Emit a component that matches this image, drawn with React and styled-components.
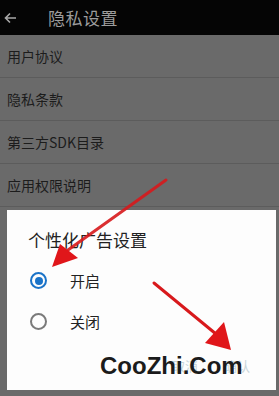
import styled, { createGlobalStyle } from "styled-components";

const GlobalStyle = createGlobalStyle`
  html, body {
    margin: 0;
    padding: 0;
    background: #6a6a6a;
  }
  body {
    font-family: "Noto Sans CJK SC", "Noto Sans", sans-serif;
  }
`;

const Screen = styled.div`
  position: relative;
  width: 279px;
  height: 396px;
  overflow: hidden;
  background: #6a6a6a;
`;

const TopBar = styled.header`
  display: flex;
  align-items: center;
  height: 35px;
  background: #050505;
  padding-left: 1px;
  gap: 27px;
`;

const Title = styled.h1`
  margin: 0;
  font-size: 17px;
  font-weight: 400;
  color: #9c9c9c;
  letter-spacing: 0.5px;
`;

const List = styled.ul`
  list-style: none;
  margin: 0;
  padding: 0;
`;

const Row = styled.li`
  display: flex;
  align-items: center;
  height: 42px;
  padding-left: 7px;
  border-bottom: 1px solid #5c5c5c;
  font-size: 14px;
  color: #1c1c1c;
`;

const Dialog = styled.div`
  position: absolute;
  left: 7px;
  top: 210px;
  width: 269px;
  height: 180px;
  background: #fdfdfd;
  display: flex;
  flex-direction: column;
  box-sizing: border-box;
  padding: 18px 0 0 21px;
`;

const DialogTitle = styled.h2`
  margin: 0 0 8px;
  font-size: 17px;
  line-height: 24px;
  font-weight: 400;
  color: #222;
`;

const Option = styled.label`
  display: flex;
  align-items: center;
  height: 41px;
  gap: 23px;
  font-size: 15px;
  color: #222;
  padding-left: 2px;
`;

const Radio = styled.span`
  box-sizing: border-box;
  width: 17px;
  height: 17px;
  border-radius: 50%;
  border: 2px solid ${(p) => (p.$checked ? "#1a73c8" : "#7a7a7a")};
  display: flex;
  align-items: center;
  justify-content: center;
  &::after {
    content: "";
    width: 8px;
    height: 8px;
    border-radius: 50%;
    background: ${(p) => (p.$checked ? "#1a73c8" : "transparent")};
  }
`;

const Actions = styled.div`
  display: flex;
  justify-content: flex-end;
  gap: 26px;
  margin-top: 14px;
  padding-right: 26px;
`;

const ActionButton = styled.span`
  font-size: 13px;
  color: #c9d5da;
`;

const Watermark = styled.div`
  position: absolute;
  left: 100px;
  top: 352px;
  font-family: "Liberation Sans", Arial, sans-serif;
  font-weight: 700;
  font-size: 24px;
  color: #1b1b1b;
`;

const Overlay = styled.svg`
  position: absolute;
  left: 0;
  top: 0;
  pointer-events: none;
`;

function BackArrow() {
  return (
    <svg width="20" height="20" viewBox="0 0 20 20">
      <path
        d="M15 10H4.5M9 5.5L4.5 10L9 14.5"
        fill="none"
        stroke="#a8a8a8"
        strokeWidth="1.6"
      />
    </svg>
  );
}

export default function App() {
  const items = ["用户协议", "隐私条款", "第三方SDK目录", "应用权限说明"];
  return (
    <Screen>
      <GlobalStyle />
      <TopBar>
        <BackArrow />
        <Title>隐私设置</Title>
      </TopBar>
      <List>
        {items.map((t) => (
          <Row key={t}>{t}</Row>
        ))}
      </List>
      <Dialog>
        <DialogTitle>个性化广告设置</DialogTitle>
        <Option>
          <Radio $checked />
          开启
        </Option>
        <Option>
          <Radio />
          关闭
        </Option>
        <Actions>
          <ActionButton>取消</ActionButton>
          <ActionButton>确认</ActionButton>
        </Actions>
      </Dialog>
      <Watermark>CooZhi.Com</Watermark>
      <Overlay width="279" height="396" viewBox="0 0 279 396">
        <line x1="166" y1="180" x2="68" y2="250" stroke="#d8191c" strokeWidth="3" strokeLinecap="round" opacity="0.9" />
        <polygon points="52,267 60,244 78,258" fill="#e0161a" />
        <line x1="154" y1="283" x2="216" y2="334" stroke="#d8191c" strokeWidth="3" strokeLinecap="round" />
        <polygon points="231,350 205,343 224,322" fill="#e0161a" />
      </Overlay>
    </Screen>
  );
}
